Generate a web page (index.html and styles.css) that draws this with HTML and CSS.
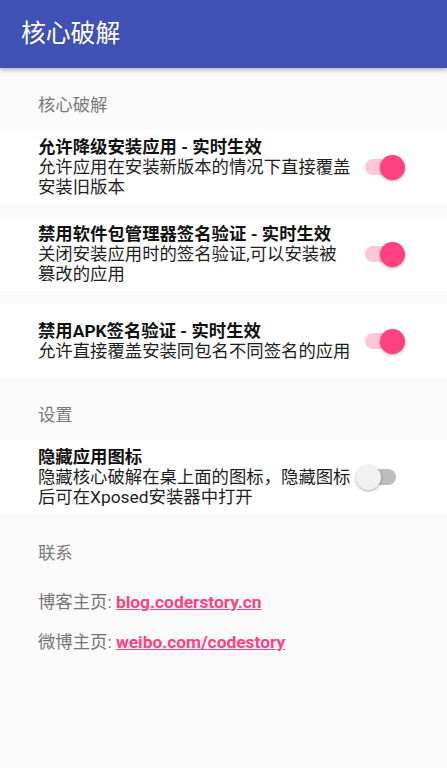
FILE: index.html
```html
<!DOCTYPE html>
<html lang="zh-CN">
<head>
<meta charset="utf-8">
<title>核心破解</title>
<link rel="stylesheet" href="styles.css">
</head>
<body>
<header class="appbar"><h1 class="appbar-title">核心破解</h1></header>
<main class="content">
  <div class="category">核心破解</div>
  <div class="pref">
    <div class="pref-text">
      <div class="pref-title">允许降级安装应用 - 实时生效</div>
      <div class="pref-summary">允许应用在安装新版本的情况下直接覆盖安装旧版本</div>
    </div>
    <div class="switch on"><span class="track"></span><span class="thumb"></span></div>
  </div>
  <div class="pref">
    <div class="pref-text">
      <div class="pref-title">禁用软件包管理器签名验证 - 实时生效</div>
      <div class="pref-summary">关闭安装应用时的签名验证,可以安装被篡改的应用</div>
    </div>
    <div class="switch on"><span class="track"></span><span class="thumb"></span></div>
  </div>
  <div class="pref">
    <div class="pref-text">
      <div class="pref-title">禁用APK签名验证 - 实时生效</div>
      <div class="pref-summary">允许直接覆盖安装同包名不同签名的应用</div>
    </div>
    <div class="switch on"><span class="track"></span><span class="thumb"></span></div>
  </div>
  <div class="category">设置</div>
  <div class="pref">
    <div class="pref-text">
      <div class="pref-title">隐藏应用图标</div>
      <div class="pref-summary">隐藏核心破解在桌上面的图标，隐藏图标后可在Xposed安装器中打开</div>
    </div>
    <div class="switch"><span class="track"></span><span class="thumb"></span></div>
  </div>
  <div class="category category-last">联系</div>
  <div class="contacts">
    <p class="contact">博客主页: <a class="link" href="#">blog.coderstory.cn</a></p>
    <p class="contact">微博主页: <a class="link" href="#">weibo.com/codestory</a></p>
  </div>
</main>
</body>
</html>
```

FILE: styles.css
```css
* { box-sizing: border-box; }
html, body {
  margin: 0;
  padding: 0;
  background: #fafafa;
  font-family: Roboto, "Noto Sans CJK SC", sans-serif;
  font-size: 17.36px;
  line-height: 20px;
}
.appbar {
  height: 68px;
  background: #3f51b5;
  display: flex;
  align-items: center;
  padding-left: 21px;
  box-shadow: 0 2px 4px rgba(0,0,0,0.28);
  position: relative;
  z-index: 1;
}
.appbar-title {
  margin: 0;
  color: #fff;
  font-size: 24.8px;
  font-weight: 400;
  line-height: 30px;
}
.content { display: flex; flex-direction: column; }
.category {
  height: 62px;
  padding: 27px 0 0 38px;
  color: #7a7a7a;
}
.category-last { padding-top: 29px; }
.pref {
  background: #fff;
  height: 74px;
  display: flex;
  align-items: center;
  padding: 0 42px 0 38px;
  gap: 4px;
}
.pref + .pref { margin-top: 13px; }
.pref-text { width: 314px; flex: none; }
.pref-title { font-weight: 700; color: #111; }
.pref-summary { color: #1e1e1e; }
.switch {
  position: relative;
  width: 49px;
  height: 25px;
  flex: none;
}
.track {
  position: absolute;
  left: 9px;
  top: 4.5px;
  width: 31px;
  height: 16px;
  border-radius: 8px;
  background: #bdbdbd;
}
.thumb {
  position: absolute;
  left: 0;
  top: 0;
  width: 25px;
  height: 25px;
  border-radius: 50%;
  background: #f1f1f1;
  box-shadow: 0 1px 3px rgba(0,0,0,0.35);
}
.switch.on .track { background: #ffc6d9; }
.switch.on .thumb { left: 24px; background: #ff4081; }
.contacts {
  padding: 16px 0 0 38px;
  display: flex;
  flex-direction: column;
  gap: 20px;
}
.contact {
  margin: 0;
  color: #757575;
}
.link {
  color: #ff4081;
  font-weight: 700;
  text-decoration: underline;
}
```
